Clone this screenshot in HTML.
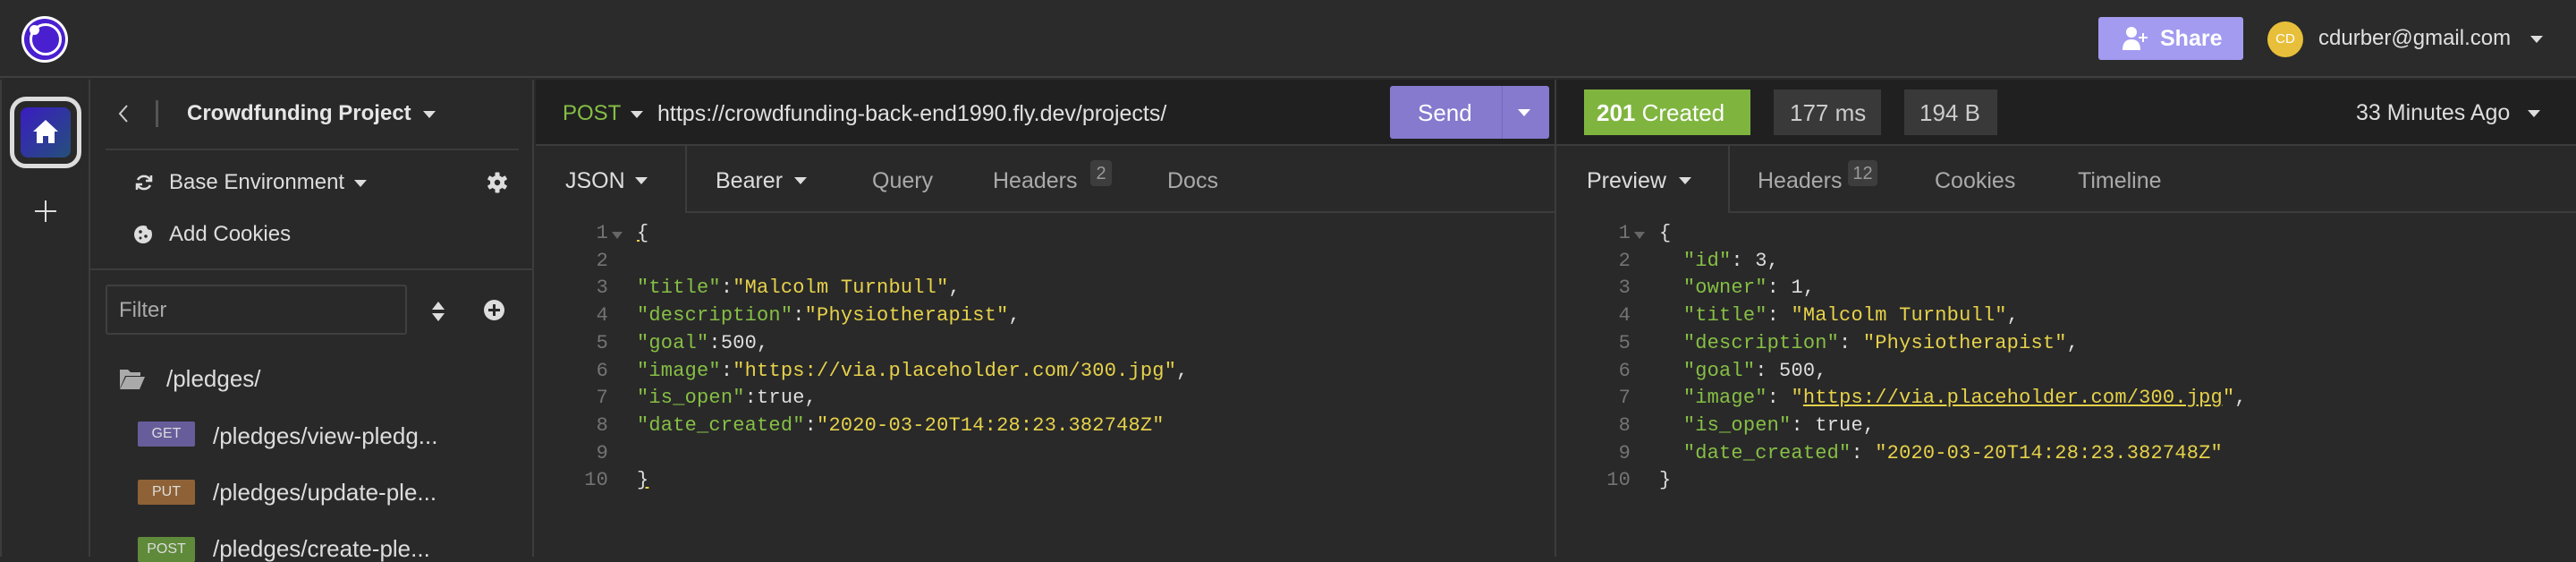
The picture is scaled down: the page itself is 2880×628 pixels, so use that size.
<!DOCTYPE html>
<html><head><meta charset="utf-8"><style>
*{margin:0;padding:0;box-sizing:border-box}
body{width:2880px;height:622px;background:#292929;font-family:"Liberation Sans",sans-serif;color:#ddd;position:relative;overflow:hidden}
.a{position:absolute;white-space:nowrap}
.t{font-size:24px;line-height:30px}
.tri{position:absolute;width:0;height:0;border-left:7px solid transparent;border-right:7px solid transparent;border-top:8px solid #ddd}
.mono{font-family:"Liberation Mono",monospace;font-size:22px;letter-spacing:0.2px;line-height:30.7px}
.ln{color:#747474;text-align:right;width:40px}
.k{color:#86bf45}.s{color:#e6d24a}.p{color:#ddd}
.hl{position:absolute;background:#3c3c3c}
.badge{position:absolute;background:#3d3d3d;border-radius:4px;color:#999;font-size:20px;text-align:center;line-height:30px}
</style></head><body>
<!-- top bar -->
<div class="a" style="left:0;top:0;width:2880px;height:87px;background:#2b2b2b;border-bottom:2px solid #3f3f3f"></div>
<div class="a" style="left:24px;top:18px;width:52px;height:52px;border-radius:50%;background:#fff"></div>
<div class="a" style="left:27px;top:21px;width:46px;height:46px;border-radius:50%;background:#4a1fd0"></div>
<div class="a" style="left:33px;top:26px;width:36px;height:36px;border-radius:50%;border:3px solid #fff"></div>
<div class="a" style="left:33px;top:28px;width:11px;height:11px;border-radius:50%;background:#fff"></div>
<div class="a" style="left:2346px;top:19px;width:162px;height:48px;background:#a39bf0;border-radius:3px"></div>
<svg class="a" style="left:2373px;top:29px" width="30" height="28" viewBox="0 0 30 28"><circle cx="10" cy="7" r="6" fill="#fff"/><path d="M0 27 Q0 15 10 15 Q20 15 20 27Z" fill="#fff"/><path d="M23 8v10M18 13h10" stroke="#fff" stroke-width="2"/></svg>
<div class="a t" style="left:2415px;top:28px;color:#fff;font-weight:bold;font-size:25px">Share</div>
<div class="a" style="left:2535px;top:24px;width:40px;height:40px;border-radius:50%;background:#e8bf3a;color:#fff;font-size:15px;line-height:40px;text-align:center">CD</div>
<div class="a t" style="left:2592px;top:28px;color:#e0e0e0;font-size:24px">cdurber@gmail.com</div>
<div class="tri" style="left:2829px;top:40px"></div>

<!-- left rail -->
<div class="a" style="left:0;top:89px;width:101px;height:533px;border-right:2px solid #3c3c3c;border-left:2px solid #3c3c3c"></div>
<div class="a" style="left:11px;top:108px;width:80px;height:80px;border-radius:18px;border:5px solid #dcdcdc"></div>
<div class="a" style="left:23px;top:120px;width:56px;height:56px;border-radius:8px;background:linear-gradient(135deg,#3a1cc2,#25507a)"></div>
<svg class="a" style="left:36px;top:133px" width="30" height="28" viewBox="0 0 30 28"><path d="M15 1 L29 14 H25 V27 H18 V19 H12 V27 H5 V14 H1Z" fill="#fff"/></svg>
<div class="a" style="left:39px;top:235px;width:24px;height:2px;background:#ddd"></div>
<div class="a" style="left:50px;top:224px;width:2px;height:24px;background:#ddd"></div>

<!-- sidebar -->
<div class="a" style="left:101px;top:89px;width:496px;height:533px;border-right:2px solid #3c3c3c"></div>
<svg class="a" style="left:132px;top:116px" width="12" height="22" viewBox="0 0 12 22"><path d="M10 2 L2 11 L10 20" stroke="#ccc" stroke-width="2" fill="none"/></svg>
<div class="a" style="left:174px;top:112px;width:3px;height:30px;background:#555"></div>
<div class="a t" style="left:209px;top:112px;font-weight:bold;color:#e6e6e6">Crowdfunding Project</div>
<div class="tri" style="left:473px;top:124px"></div>
<div class="hl" style="left:118px;top:166px;width:462px;height:2px"></div>
<svg class="a" style="left:150px;top:193px" width="22" height="22" viewBox="0 0 22 22"><path d="M18 8 A8 8 0 0 0 4 8 M4 14 A8 8 0 0 0 18 14" stroke="#ddd" stroke-width="2.5" fill="none"/><path d="M19 3v6h-6M3 19v-6h6" stroke="#ddd" stroke-width="2.5" fill="none"/></svg>
<div class="a t" style="left:189px;top:189px">Base Environment</div>
<div class="tri" style="left:396px;top:201px"></div>
<svg class="a" style="left:544px;top:191px" width="24" height="26" viewBox="0 0 24 24"><g fill="#ddd"><circle cx="12" cy="12" r="8"/><rect x="9.5" y="0.5" width="5" height="6" rx="1"/><rect x="9.5" y="17.5" width="5" height="6" rx="1"/><rect x="9.5" y="0.5" width="5" height="6" rx="1" transform="rotate(60 12 12)"/><rect x="9.5" y="0.5" width="5" height="6" rx="1" transform="rotate(120 12 12)"/><rect x="9.5" y="0.5" width="5" height="6" rx="1" transform="rotate(240 12 12)"/><rect x="9.5" y="0.5" width="5" height="6" rx="1" transform="rotate(300 12 12)"/></g><circle cx="12" cy="12" r="3.2" fill="#292929"/></svg>
<svg class="a" style="left:149px;top:250px" width="22" height="24" viewBox="0 0 22 24"><circle cx="11" cy="12" r="10" fill="#ddd"/><circle cx="8" cy="9" r="1.8" fill="#292929"/><circle cx="14" cy="14" r="1.8" fill="#292929"/><circle cx="8" cy="16" r="1.5" fill="#292929"/><circle cx="19" cy="3" r="4" fill="#292929"/></svg>
<div class="a t" style="left:189px;top:247px">Add Cookies</div>
<div class="hl" style="left:101px;top:300px;width:496px;height:2px"></div>
<div class="a" style="left:118px;top:318px;width:337px;height:56px;border:2px solid #3f3f3f;border-radius:3px"></div>
<div class="a t" style="left:133px;top:332px;color:#aaa">Filter</div>
<svg class="a" style="left:482px;top:336px" width="16" height="24" viewBox="0 0 16 24"><path d="M8 1 L15 10 H1Z M8 23 L15 14 H1Z" fill="#ddd"/></svg>
<div class="a" style="left:541px;top:335px;width:23px;height:23px;border-radius:50%;background:#ddd"></div>
<div class="a" style="left:546px;top:345px;width:13px;height:3px;background:#292929"></div>
<div class="a" style="left:551px;top:340px;width:3px;height:13px;background:#292929"></div>
<svg class="a" style="left:133px;top:410px" width="30" height="26" viewBox="0 0 30 26"><path d="M1 3 H10 L13 6 H24 V10 H7 L1 24Z" fill="#aaa"/><path d="M8 11 H29 L23 25 H1Z" fill="#aaa"/></svg>
<div class="a t" style="left:186px;top:408px;font-size:26px">/pledges/</div>
<div class="a" style="left:154px;top:471px;width:64px;height:28px;background:#675d9a;border-radius:2px;color:#ddd;font-size:16px;line-height:28px;text-align:center">GET</div>
<div class="a t" style="left:238px;top:472px;font-size:26px">/pledges/view-pledg...</div>
<div class="a" style="left:154px;top:536px;width:64px;height:28px;background:#8e6236;border-radius:2px;color:#ddd;font-size:16px;line-height:28px;text-align:center">PUT</div>
<div class="a t" style="left:238px;top:535px;font-size:26px">/pledges/update-ple...</div>
<div class="a" style="left:154px;top:600px;width:64px;height:28px;background:#5f8a3a;border-radius:2px;color:#ddd;font-size:16px;line-height:28px;text-align:center">POST</div>
<div class="a t" style="left:238px;top:598px;font-size:26px">/pledges/create-ple...</div>

<!-- request pane -->
<div class="a" style="left:599px;top:89px;width:1139px;height:74px;background:#202020;border-bottom:2px solid #3c3c3c"></div>
<div class="a t" style="left:629px;top:112px;color:#86bf45">POST</div>
<div class="tri" style="left:705px;top:124px"></div>
<div class="a t" style="left:735px;top:112px;color:#e0e0e0;font-size:25px">https://crowdfunding-back-end1990.fly.dev/projects/</div>
<div class="a" style="left:1554px;top:96px;width:178px;height:59px;background:#857ace;border-radius:3px"></div>
<div class="a" style="left:1679px;top:96px;width:1px;height:59px;background:#7568b8"></div>
<div class="a t" style="left:1585px;top:111px;color:#fff;font-size:26px">Send</div>
<div class="tri" style="left:1697px;top:122px;border-top-color:#fff"></div>
<div class="hl" style="left:766px;top:163px;width:2px;height:75px"></div>
<div class="hl" style="left:766px;top:236px;width:972px;height:2px"></div>
<div class="a t" style="left:632px;top:187px;font-size:25px">JSON</div>
<div class="tri" style="left:710px;top:198px"></div>
<div class="a t" style="left:800px;top:187px;font-size:25px">Bearer</div>
<div class="tri" style="left:888px;top:198px"></div>
<div class="a t" style="left:975px;top:187px;font-size:25px;color:#aaa">Query</div>
<div class="a t" style="left:1110px;top:187px;font-size:25px;color:#aaa">Headers</div>
<div class="badge" style="left:1219px;top:179px;width:24px;height:29px">2</div>
<div class="a t" style="left:1305px;top:187px;font-size:25px;color:#aaa">Docs</div>

<div class="a mono ln" style="left:640px;top:246px">1<br>2<br>3<br>4<br>5<br>6<br>7<br>8<br>9<br>10</div>
<div class="tri" style="left:684px;top:259px;border-top-color:#666;border-left-width:6px;border-right-width:6px"></div>
<div class="a mono" style="left:712px;top:246px"><span class="p" style="text-decoration:underline;text-decoration-color:#e6d24a">{</span><br><br><span class="k">"title"</span><span class="p">:</span><span class="s">"Malcolm Turnbull"</span><span class="p">,</span><br><span class="k">"description"</span><span class="p">:</span><span class="s">"Physiotherapist"</span><span class="p">,</span><br><span class="k">"goal"</span><span class="p">:500,</span><br><span class="k">"image"</span><span class="p">:</span><span class="s">"https://via.placeholder.com/300.jpg"</span><span class="p">,</span><br><span class="k">"is_open"</span><span class="p">:true,</span><br><span class="k">"date_created"</span><span class="p">:</span><span class="s">"2020-03-20T14:28:23.382748Z"</span><br><br><span class="p" style="text-decoration:underline;text-decoration-color:#e6d24a">}</span></div>

<!-- response pane -->
<div class="a" style="left:1738px;top:89px;width:2px;height:533px;background:#3c3c3c"></div>
<div class="a" style="left:1740px;top:89px;width:1140px;height:74px;background:#202020;border-bottom:2px solid #3c3c3c"></div>
<div class="a" style="left:1771px;top:100px;width:186px;height:51px;background:#7fb53f"></div>
<div class="a t" style="left:1785px;top:111px;color:#fff;font-size:26px"><b>201</b> Created</div>
<div class="a" style="left:1983px;top:100px;width:120px;height:51px;background:#393939"></div>
<div class="a t" style="left:2001px;top:111px;font-size:26px;color:#ccc">177 ms</div>
<div class="a" style="left:2129px;top:100px;width:104px;height:51px;background:#393939"></div>
<div class="a t" style="left:2146px;top:111px;font-size:26px;color:#ccc">194 B</div>
<div class="a t" style="left:2634px;top:111px;font-size:25px;color:#ddd">33 Minutes Ago</div>
<div class="tri" style="left:2826px;top:123px"></div>
<div class="hl" style="left:1932px;top:163px;width:2px;height:75px"></div>
<div class="hl" style="left:1932px;top:236px;width:948px;height:2px"></div>
<div class="a t" style="left:1774px;top:187px;font-size:25px">Preview</div>
<div class="tri" style="left:1877px;top:198px"></div>
<div class="a t" style="left:1965px;top:187px;font-size:25px;color:#aaa">Headers</div>
<div class="badge" style="left:2066px;top:179px;width:33px;height:29px">12</div>
<div class="a t" style="left:2163px;top:187px;font-size:25px;color:#aaa">Cookies</div>
<div class="a t" style="left:2323px;top:187px;font-size:25px;color:#aaa">Timeline</div>

<div class="a mono ln" style="left:1783px;top:246px">1<br>2<br>3<br>4<br>5<br>6<br>7<br>8<br>9<br>10</div>
<div class="tri" style="left:1827px;top:259px;border-top-color:#666;border-left-width:6px;border-right-width:6px"></div>
<div class="a mono p" style="left:1855px;top:246px;white-space:pre">{<br>  <span class="k">"id"</span>: 3,<br>  <span class="k">"owner"</span>: 1,<br>  <span class="k">"title"</span>: <span class="s">"Malcolm Turnbull"</span>,<br>  <span class="k">"description"</span>: <span class="s">"Physiotherapist"</span>,<br>  <span class="k">"goal"</span>: 500,<br>  <span class="k">"image"</span>: <span class="s">"<u>https://via.placeholder.com/300.jpg</u>"</span>,<br>  <span class="k">"is_open"</span>: true,<br>  <span class="k">"date_created"</span>: <span class="s">"2020-03-20T14:28:23.382748Z"</span><br>}</div>
</body></html>
